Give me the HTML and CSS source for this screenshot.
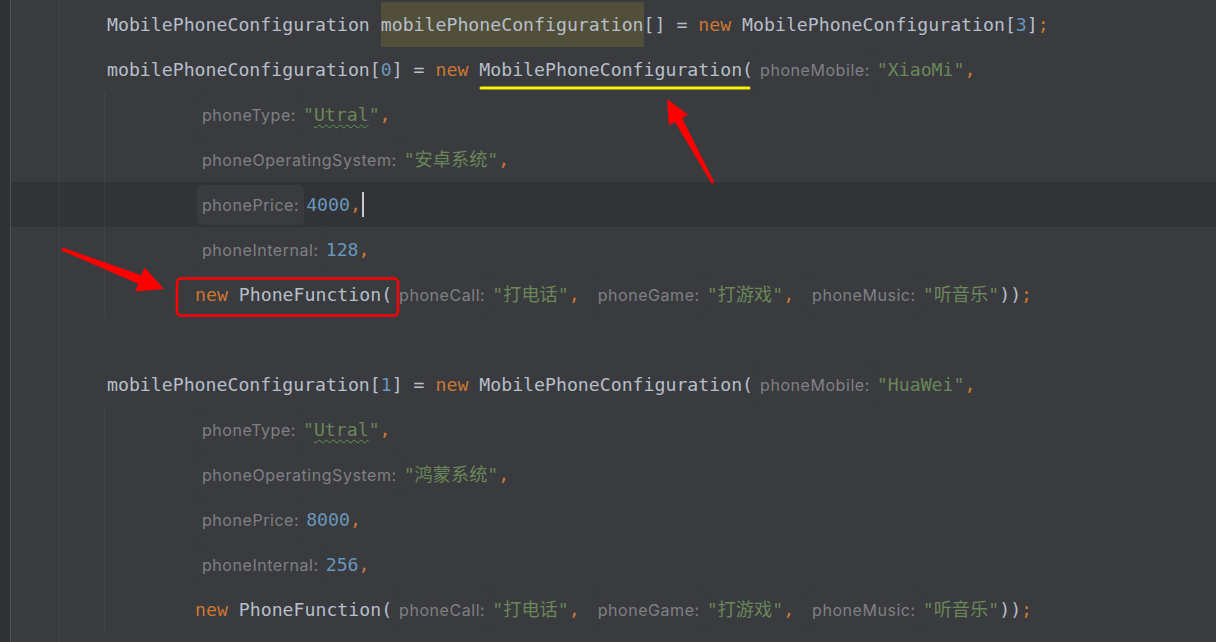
FILE: index.html
```html
<!DOCTYPE html>
<html lang="zh">
<head>
<meta charset="utf-8">
<title>MobilePhoneConfiguration</title>
<link rel="stylesheet" href="styles.css">
</head>
<body>
<div class="editor">
  <div class="gutter"></div>
  <div class="code">
    <div class="line">MobilePhoneConfiguration <span class="sel">mobilePhoneConfiguration</span>[] = <span class="kw">new</span> MobilePhoneConfiguration[<span class="num">3</span>]<span class="kw">;</span></div>
    <div class="line">mobilePhoneConfiguration[<span class="num">0</span>] = <span class="kw">new</span> MobilePhoneConfiguration(<span class="hint">phoneMobile:</span><span class="str">"XiaoMi"</span><span class="kw">,</span></div>
    <div class="line cont in"><span class="hint">phoneType:</span><span class="str">"<span class="typo">Utral</span>"</span><span class="kw">,</span></div>
    <div class="line cont in"><span class="hint">phoneOperatingSystem:</span><span class="str">"安卓系统"</span><span class="kw">,</span></div>
    <div class="line cont in cur"><span class="hint">phonePrice:</span><span class="num">4000</span><span class="kw">,</span><span class="caret"></span></div>
    <div class="line cont in"><span class="hint">phoneInternal:</span><span class="num">128</span><span class="kw">,</span></div>
    <div class="line cont in"><span class="kw">new</span> PhoneFunction(<span class="hint">phoneCall:</span><span class="str">"打电话"</span><span class="kw">,</span> <span class="hint">phoneGame:</span><span class="str">"打游戏"</span><span class="kw">,</span> <span class="hint">phoneMusic:</span><span class="str">"听音乐"</span>))<span class="kw">;</span></div>
    <div class="line"></div>
    <div class="line">mobilePhoneConfiguration[<span class="num">1</span>] = <span class="kw">new</span> MobilePhoneConfiguration(<span class="hint">phoneMobile:</span><span class="str">"HuaWei"</span><span class="kw">,</span></div>
    <div class="line cont in"><span class="hint">phoneType:</span><span class="str">"<span class="typo">Utral</span>"</span><span class="kw">,</span></div>
    <div class="line cont in"><span class="hint">phoneOperatingSystem:</span><span class="str">"鸿蒙系统"</span><span class="kw">,</span></div>
    <div class="line cont in"><span class="hint">phonePrice:</span><span class="num">8000</span><span class="kw">,</span></div>
    <div class="line cont in"><span class="hint">phoneInternal:</span><span class="num">256</span><span class="kw">,</span></div>
    <div class="line cont in"><span class="kw">new</span> PhoneFunction(<span class="hint">phoneCall:</span><span class="str">"打电话"</span><span class="kw">,</span> <span class="hint">phoneGame:</span><span class="str">"打游戏"</span><span class="kw">,</span> <span class="hint">phoneMusic:</span><span class="str">"听音乐"</span>))<span class="kw">;</span></div>
  </div>
  <svg class="marks" width="1216" height="642" viewBox="0 0 1216 642" aria-hidden="true">
    <line x1="481" y1="88" x2="749" y2="88" stroke="#fff200" stroke-width="3" stroke-linecap="round"/>
    <polygon fill="#ff0000" points="667,99 688.1,114.7 682,118.1 714.3,182.3 711.7,183.7 675,121.9 668.9,125.3"/>
    <polygon fill="#ff0000" points="164,289 144.5,267.4 141.4,275.3 62.55,247.6 61.45,250.4 138.2,283.7 135.1,291.6"/>
    <rect x="177" y="278.5" width="221" height="37" rx="4" ry="4" fill="none" stroke="#ff0000" stroke-width="2.5"/>
  </svg>
</div>
</body>
</html>
```
FILE: styles.css
```css
html, body {
  margin: 0;
  height: 100%;
}

body {
  background: #3a3b3f;
  overflow: hidden;
}

.editor {
  position: relative;
  display: flex;
  width: 1216px;
  height: 642px;
}

.gutter {
  flex: none;
  width: 10px;
  background: #313236;
  border-right: 1px solid #4e4f53;
}

.code {
  flex: 1;
  padding-top: 2px;
  font-family: "DejaVu Sans Mono", "Noto Sans CJK SC", monospace;
  font-size: 18.2px;
  color: #b7bfca;
  background-image: linear-gradient(90deg, transparent 48px, #434448 48px, #434448 49px, transparent 49px);
}

.line {
  height: 45px;
  line-height: 45px;
  white-space: pre;
  padding-left: 96px;
}

.line.in {
  padding-left: 184px;
}

.line.cont {
  background-image: linear-gradient(90deg, transparent 93px, #434448 93px, #434448 94px, transparent 94px);
}

.line.cur {
  background-color: #323336;
  background-image: linear-gradient(90deg, transparent 48px, #3c3d41 48px, #3c3d41 49px, transparent 49px, transparent 93px, #3c3d41 93px, #3c3d41 94px, transparent 94px);
}

.sel {
  display: inline-block;
  background: #514f39;
}

.kw {
  color: #cc7832;
}

.num {
  color: #6897bb;
}

.str {
  color: #6a8759;
}

.typo {
  text-decoration: underline wavy #5f9a4c;
  text-decoration-thickness: 1px;
  text-underline-offset: 3px;
}

.hint {
  display: inline-block;
  height: 40px;
  line-height: 40px;
  margin: 0 2px;
  padding: 0 5px;
  border-radius: 5px;
  background: #3a3b3f;
  font-family: Inter, "Noto Sans", sans-serif;
  font-size: 16px;
  letter-spacing: 0.55px;
  color: #7f8084;
}

.caret {
  display: inline-block;
  width: 2px;
  height: 25px;
  margin-left: 1px;
  background: #c9c9c9;
  vertical-align: -6px;
}

.marks {
  position: absolute;
  top: 0;
  left: 0;
  pointer-events: none;
}
```
